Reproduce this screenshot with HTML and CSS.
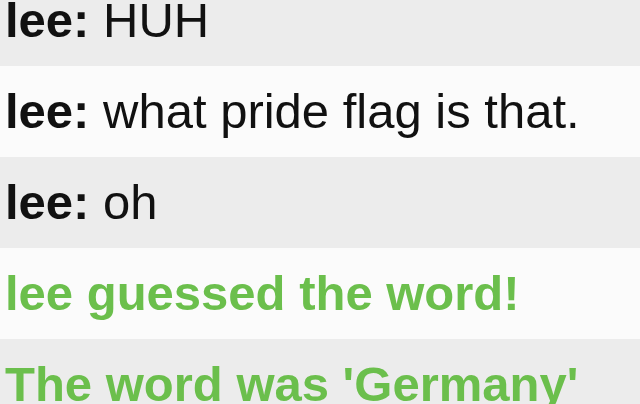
FILE: index.html
```html
<!DOCTYPE html>
<html>
<head>
<meta charset="utf-8">
<link rel="stylesheet" href="styles.css">
</head>
<body>
<ul class="chat">
  <li class="msg odd"><b class="name">lee:</b> HUH</li>
  <li class="msg even"><b class="name">lee:</b> what pride flag is that.</li>
  <li class="msg odd"><b class="name">lee:</b> oh</li>
  <li class="msg even system">lee guessed the word!</li>
  <li class="msg odd system">The word was 'Germany'</li>
</ul>
</body>
</html>
```
FILE: styles.css
```css
html, body {
  margin: 0;
  padding: 0;
  background: #fafafa;
  overflow: hidden;
}
.chat {
  list-style: none;
  margin: -25px 0 0 0;
  padding: 0;
  font-family: "Liberation Sans", Arial, sans-serif;
  font-size: 49px;
  color: #111;
}
.msg {
  height: 91px;
  line-height: 91px;
  padding-left: 5px;
  white-space: nowrap;
}
.odd {
  background: #ececec;
}
.even {
  background: #fbfbfb;
}
.name {
  font-weight: bold;
}
.system {
  font-weight: bold;
  color: #6bbf4c;
}
```
